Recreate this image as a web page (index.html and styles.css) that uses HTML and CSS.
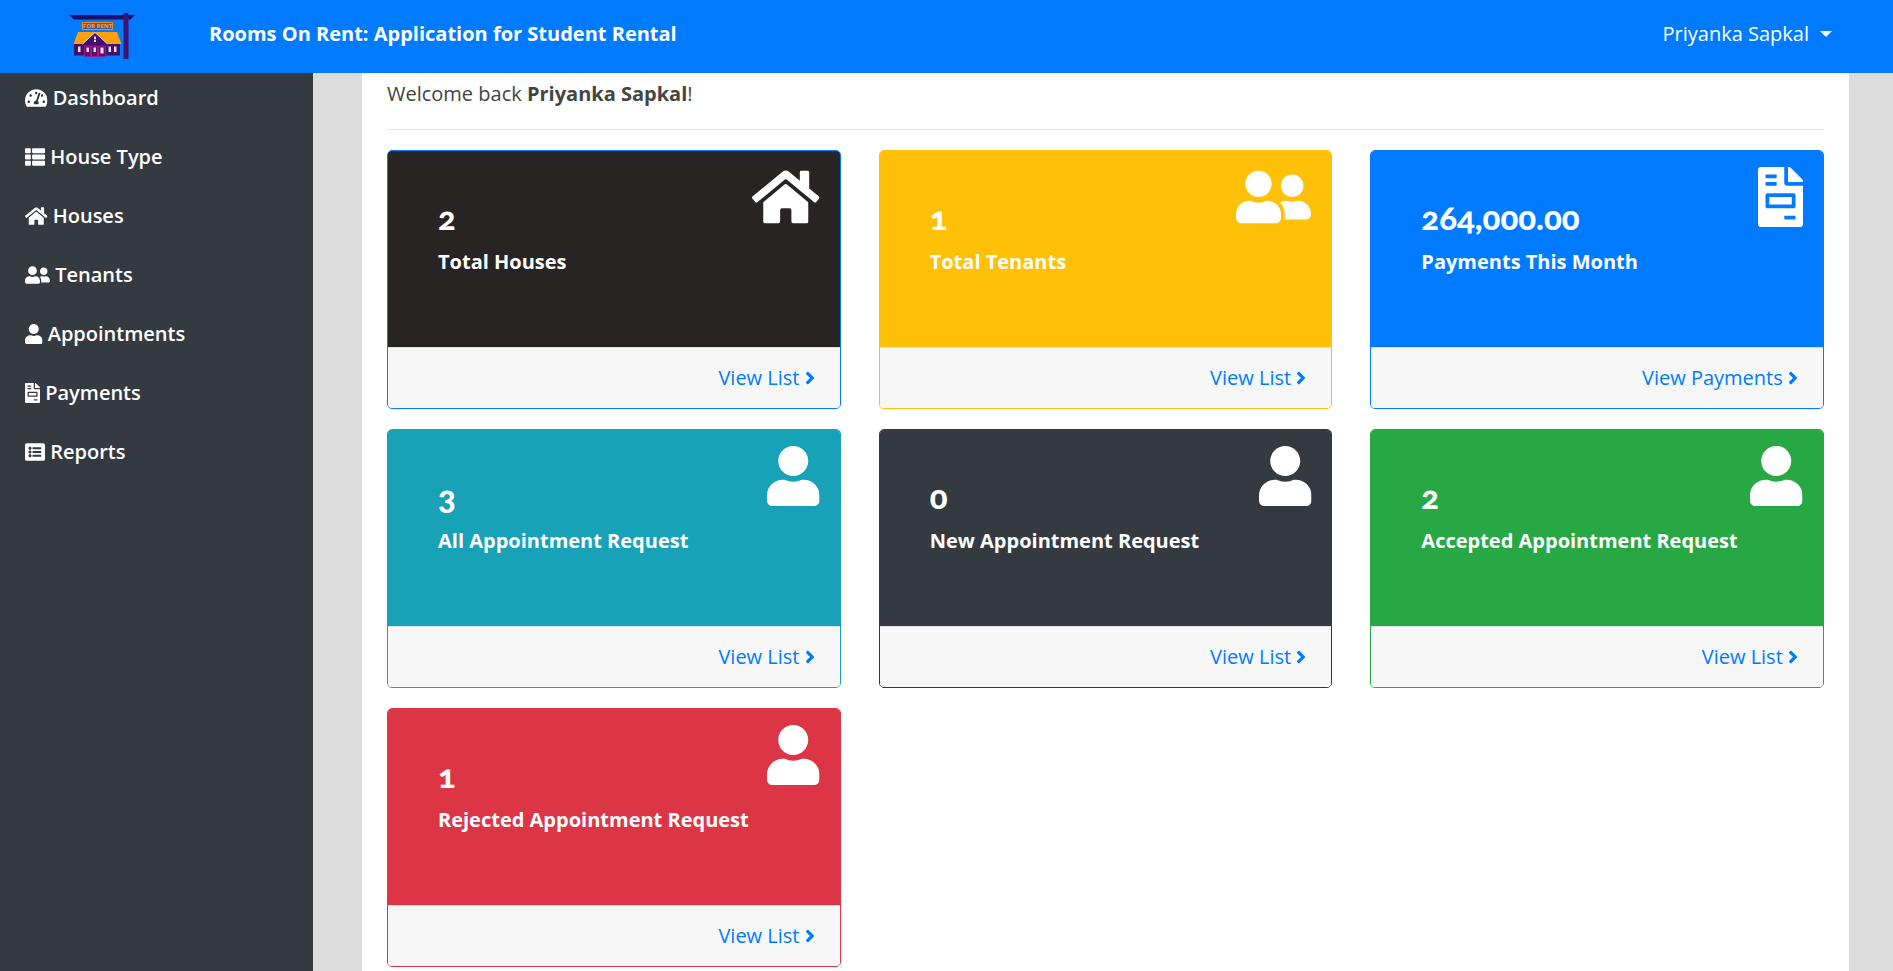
FILE: index.html
```
<!DOCTYPE html>
<html lang="en">
<head>
<meta charset="utf-8">
<meta name="viewport" content="width=device-width, initial-scale=1">
<title>Rooms On Rent</title>
<link rel="stylesheet" href="styles.css">
</head>
<body>
<svg class="sprite" aria-hidden="true">
  <symbol id="i-dash" viewBox="0 0 576 512"><path d="M288 32C128.94 32 0 160.94 0 320c0 52.8 14.25 102.26 39.06 144.8 5.61 9.62 16.3 15.2 27.44 15.2h443c11.14 0 21.83-5.58 27.44-15.2C561.75 422.26 576 372.8 576 320c0-159.06-128.94-288-288-288zm0 64c14.71 0 26.58 10.13 30.32 23.65-1.11 2.26-2.64 4.23-3.45 6.67l-9.22 27.67c-5.13 3.49-10.97 6.01-17.64 6.01-17.67 0-32-14.33-32-32S270.33 96 288 96zM96 384c-17.67 0-32-14.33-32-32s14.33-32 32-32 32 14.33 32 32-14.33 32-32 32zm48-160c-17.67 0-32-14.33-32-32s14.33-32 32-32 32 14.33 32 32-14.33 32-32 32zm246.77-72.41l-61.33 184C343.13 347.33 352 364.54 352 384c0 11.72-3.38 22.55-8.88 32H232.88c-5.5-9.45-8.88-20.28-8.88-32 0-33.94 26.5-61.43 59.9-63.59l61.34-184.01c4.17-12.56 17.73-19.45 30.36-15.17 12.57 4.19 19.35 17.79 15.17 30.36zm14.66 57.2l15.52-46.55c3.47-1.29 7.13-2.23 11.05-2.23 17.67 0 32 14.33 32 32s-14.33 32-32 32c-11.38-.01-20.89-6.28-26.57-15.22zM480 384c-17.67 0-32-14.33-32-32s14.33-32 32-32 32 14.33 32 32-14.33 32-32 32z"/></symbol>
  <symbol id="i-list" viewBox="0 0 512 512"><path d="M149.333 216v80c0 13.255-10.745 24-24 24H24c-13.255 0-24-10.745-24-24v-80c0-13.255 10.745-24 24-24h101.333c13.255 0 24 10.745 24 24zM0 376v80c0 13.255 10.745 24 24 24h101.333c13.255 0 24-10.745 24-24v-80c0-13.255-10.745-24-24-24H24c-13.255 0-24 10.745-24 24zM125.333 32H24C10.745 32 0 42.745 0 56v80c0 13.255 10.745 24 24 24h101.333c13.255 0 24-10.745 24-24V56c0-13.255-10.745-24-24-24zm80 448H488c13.255 0 24-10.745 24-24v-80c0-13.255-10.745-24-24-24H205.333c-13.255 0-24 10.745-24 24v80c0 13.255 10.745 24 24 24zm-24-424v80c0 13.255 10.745 24 24 24H488c13.255 0 24-10.745 24-24V56c0-13.255-10.745-24-24-24H205.333c-13.255 0-24 10.745-24 24zm24 264H488c13.255 0 24-10.745 24-24v-80c0-13.255-10.745-24-24-24H205.333c-13.255 0-24 10.745-24 24v80c0 13.255 10.745 24 24 24z"/></symbol>
  <symbol id="i-home" viewBox="0 0 576 512"><path d="M280.37 148.26L96 300.11V464a16 16 0 0 0 16 16l112.06-.29a16 16 0 0 0 15.92-16V368a16 16 0 0 1 16-16h64a16 16 0 0 1 16 16v95.64a16 16 0 0 0 16 16.05L464 480a16 16 0 0 0 16-16V300L295.67 148.26a12.19 12.19 0 0 0-15.3 0zM571.6 251.47L488 182.56V44.05a12 12 0 0 0-12-12h-56a12 12 0 0 0-12 12v72.61L318.47 43a48 48 0 0 0-61 0L4.34 251.47a12 12 0 0 0-1.6 16.9l25.5 31A12 12 0 0 0 45.15 301l235.22-193.74a12.19 12.19 0 0 1 15.3 0L530.9 301a12 12 0 0 0 16.9-1.6l25.5-31a12 12 0 0 0-1.7-16.93z"/></symbol>
  <symbol id="i-users" viewBox="0 0 640 512"><path d="M192 256c61.9 0 112-50.1 112-112S253.9 32 192 32 80 82.1 80 144s50.1 112 112 112zm76.8 32h-8.3c-20.8 10-43.9 16-68.5 16s-47.6-6-68.5-16h-8.3C51.6 288 0 339.6 0 403.2V432c0 26.5 21.5 48 48 48h288c26.5 0 48-21.5 48-48v-28.8c0-63.6-51.6-115.2-115.2-115.2zM480 256c53 0 96-43 96-96s-43-96-96-96-96 43-96 96 43 96 96 96zm48 32h-3.8c-13.9 4.8-28.6 8-44.2 8s-30.3-3.2-44.2-8H432c-20.4 0-39.2 5.9-55.7 15.4 24.4 26.3 39.7 61.2 39.7 99.8v38.4c0 2.2-.5 4.3-.6 6.4H592c26.5 0 48-21.5 48-48 0-61.9-50.1-112-112-112z"/></symbol>
  <symbol id="i-user" viewBox="0 0 448 512"><path d="M224 256c70.7 0 128-57.3 128-128S294.7 0 224 0 96 57.3 96 128s57.3 128 128 128zm89.6 32h-16.7c-22.2 10.2-46.9 16-72.9 16s-50.6-5.8-72.9-16h-16.7C60.2 288 0 348.2 0 422.4V464c0 26.5 21.5 48 48 48h352c26.5 0 48-21.5 48-48v-41.6c0-74.2-60.2-134.4-134.4-134.4z"/></symbol>
  <symbol id="i-file" viewBox="0 0 384 512"><path d="M288 256H96v64h192v-64zm89-151L279.1 7c-4.5-4.5-10.6-7-17-7H256v128h128v-6.1c0-6.3-2.5-12.4-7-16.9zm-153 31V0H24C10.7 0 0 10.7 0 24v464c0 13.3 10.7 24 24 24h336c13.3 0 24-10.7 24-24V160H248c-13.2 0-24-10.8-24-24zM64 72c0-4.42 3.58-8 8-8h80c4.42 0 8 3.58 8 8v16c0 4.42-3.58 8-8 8H72c-4.42 0-8-3.58-8-8V72zm0 64c0-4.42 3.58-8 8-8h80c4.42 0 8 3.58 8 8v16c0 4.42-3.58 8-8 8H72c-4.42 0-8-3.58-8-8v-16zm256 304c0 4.42-3.58 8-8 8h-80c-4.42 0-8-3.58-8-8v-16c0-4.42 3.58-8 8-8h80c4.42 0 8 3.58 8 8v16zm0-200v96c0 8.84-7.16 16-16 16H80c-8.84 0-16-7.16-16-16v-96c0-8.84 7.16-16 16-16h224c8.84 0 16 7.16 16 16z"/></symbol>
  <symbol id="i-report" viewBox="0 0 512 512"><path d="M464 480H48c-26.51 0-48-21.49-48-48V80c0-26.51 21.49-48 48-48h416c26.51 0 48 21.49 48 48v352c0 26.51-21.49 48-48 48zM128 120c-22.091 0-40 17.909-40 40s17.909 40 40 40 40-17.909 40-40-17.909-40-40-40zm0 96c-22.091 0-40 17.909-40 40s17.909 40 40 40 40-17.909 40-40-17.909-40-40-40zm0 96c-22.091 0-40 17.909-40 40s17.909 40 40 40 40-17.909 40-40-17.909-40-40-40zm288-136v-32c0-6.627-5.373-12-12-12H204c-6.627 0-12 5.373-12 12v32c0 6.627 5.373 12 12 12h200c6.627 0 12-5.373 12-12zm0 96v-32c0-6.627-5.373-12-12-12H204c-6.627 0-12 5.373-12 12v32c0 6.627 5.373 12 12 12h200c6.627 0 12-5.373 12-12zm0 96v-32c0-6.627-5.373-12-12-12H204c-6.627 0-12 5.373-12 12v32c0 6.627 5.373 12 12 12h200c6.627 0 12-5.373 12-12z"/></symbol>
  <symbol id="i-angle" viewBox="0 0 256 512"><path d="M224.3 273l-136 136c-9.4 9.4-24.6 9.4-33.9 0l-22.6-22.6c-9.4-9.4-9.4-24.6 0-33.9l96.4-96.4-96.4-96.4c-9.4-9.4-9.4-24.6 0-33.9L54.3 103c9.4-9.4 24.6-9.4 33.9 0l136 136c9.5 9.4 9.5 24.6.1 34z"/></symbol>
</svg>

<header class="topbar">
  <svg class="logo" viewBox="0 0 66 48" role="img" aria-label="For rent">
    <path fill="#1e1068" d="M0 2h66l-4.500 4.500H5z"/>
    <path fill="#3c1272" d="M54.500 0h5v46h-5z"/>
    <path stroke="#5a3a8c" d="M16 6v4M43 6v4"/>
    <path fill="#55508a" stroke="#e8960f" d="M13.500 9.500h30v7h-30z"/>
    <text class="logo-sign" x="28.500" y="15.400" text-anchor="middle">FOR RENT</text>
    <path fill="#42106e" d="M5 31h46v11.500H5z"/>
    <path fill="#ff9f0a" d="M9 19h39l4.500 12H4.500z"/>
    <path fill="#42106e" stroke="#f3d3c0" d="M13.500 31 26 19.500 38.500 31"/>
    <path fill="#560f74" stroke="#a01880" d="M15.500 33h6v10.500h-6zM22.500 33h6v10.500h-6zM29.500 33h7v10.500h-7z"/>
    <path fill="#f0dce6" d="M9 33.500h2.500V39H9zM17.500 34.500H20V39h-2.500zM24.500 34.500H27V39h-2.500zM31.500 34.500h3v6h-3zM39.500 33.500H42V39h-2.500zM45 33.500h2.500V39H45zM25 23.500h2V29h-2z"/>
    <path fill="#560f74" d="M24.500 26h3v.700h-3z"/>
  </svg>
  <strong class="brand">Rooms On Rent: Application for Student Rental</strong>
  <button class="account" type="button">Priyanka Sapkal<span class="caret"></span></button>
</header>

<div class="layout">
  <nav class="sidebar">
    <a href="#"><svg class="icon w576"><use href="#i-dash"/></svg> Dashboard</a>
    <a href="#"><svg class="icon w512"><use href="#i-list"/></svg> House Type</a>
    <a href="#"><svg class="icon w576"><use href="#i-home"/></svg> Houses</a>
    <a href="#"><svg class="icon w640"><use href="#i-users"/></svg> Tenants</a>
    <a href="#"><svg class="icon w448"><use href="#i-user"/></svg> Appointments</a>
    <a href="#"><svg class="icon w384"><use href="#i-file"/></svg> Payments</a>
    <a href="#"><svg class="icon w512"><use href="#i-report"/></svg> Reports</a>
  </nav>
  <main class="main">
    <div class="panel">
      <p class="welcome">Welcome back <b>Priyanka Sapkal</b>!</p>
      <hr class="rule">
      <div class="cards">
        <section class="card primary">
          <div class="card-body black"><svg class="icon big w576"><use href="#i-home"/></svg><h4>2</h4><p>Total Houses</p></div>
          <div class="card-foot"><a href="#">View List <svg class="icon w256"><use href="#i-angle"/></svg></a></div>
        </section>
        <section class="card warning">
          <div class="card-body"><svg class="icon big w640"><use href="#i-users"/></svg><h4>1</h4><p>Total Tenants</p></div>
          <div class="card-foot"><a href="#">View List <svg class="icon w256"><use href="#i-angle"/></svg></a></div>
        </section>
        <section class="card primary">
          <div class="card-body"><svg class="icon big w384"><use href="#i-file"/></svg><h4>264,000.00</h4><p>Payments This Month</p></div>
          <div class="card-foot"><a href="#">View Payments <svg class="icon w256"><use href="#i-angle"/></svg></a></div>
        </section>
        <section class="card info">
          <div class="card-body"><svg class="icon big w448"><use href="#i-user"/></svg><h4>3</h4><p>All Appointment Request</p></div>
          <div class="card-foot"><a href="#">View List <svg class="icon w256"><use href="#i-angle"/></svg></a></div>
        </section>
        <section class="card dark">
          <div class="card-body"><svg class="icon big w448"><use href="#i-user"/></svg><h4>0</h4><p>New Appointment Request</p></div>
          <div class="card-foot"><a href="#">View List <svg class="icon w256"><use href="#i-angle"/></svg></a></div>
        </section>
        <section class="card success">
          <div class="card-body"><svg class="icon big w448"><use href="#i-user"/></svg><h4>2</h4><p>Accepted Appointment Request</p></div>
          <div class="card-foot"><a href="#">View List <svg class="icon w256"><use href="#i-angle"/></svg></a></div>
        </section>
        <section class="card danger">
          <div class="card-body"><svg class="icon big w448"><use href="#i-user"/></svg><h4>1</h4><p>Rejected Appointment Request</p></div>
          <div class="card-foot"><a href="#">View List <svg class="icon w256"><use href="#i-angle"/></svg></a></div>
        </section>
      </div>
    </div>
  </main>
</div>
</body>
</html>
```
FILE: styles.css
```
* { box-sizing: border-box; }
body {
  margin: 0;
  min-height: 100vh;
  display: flex;
  flex-direction: column;
  background: #dcdcdc;
  color: #444;
  font: 400 20px/30px "Open Sans", "Noto Sans", sans-serif;
}
p, h4 { margin: 0; }
.sprite { display: none; }

.topbar {
  display: flex;
  align-items: flex-start;
  padding: 13px 61px 12px 69px;
  background: #007bff;
  color: #fff;
}
.logo { width: 66px; height: 48px; flex: none; }
.logo-sign { font: 700 6px "Open Sans", sans-serif; fill: #ffa61a; }
.brand { margin: 6px 0 0 74px; font-weight: 700; }
.account {
  display: flex;
  align-items: center;
  gap: 11px;
  margin: 6px 0 0 auto;
  padding: 0;
  border: 0;
  background: none;
  color: inherit;
  font: inherit;
}
.caret {
  border: 6px solid transparent;
  border-top-color: #fff;
  border-bottom: 0;
}

.layout { flex: 1; display: flex; }
.sidebar {
  flex: 0 0 313px;
  display: flex;
  flex-direction: column;
  gap: 9px;
  background: #343a40;
}
.sidebar a {
  padding: 10px 25px;
  color: #fff;
  font-weight: 600;
  text-decoration: none;
}

.icon {
  height: 1em;
  fill: currentColor;
  vertical-align: -0.125em;
  overflow: visible;
}
.w256 { width: 0.5em; }
.w384 { width: 0.75em; }
.w448 { width: 0.875em; }
.w512 { width: 1em; }
.w576 { width: 1.125em; }
.w640 { width: 1.25em; }

.main { flex: 1; display: flex; padding: 0 44px 0 49px; }
.panel { flex: 1; padding: 6px 25px 0; background: #fff; }
.rule { margin: 20px 0; border: 0; border-top: 1px solid #e5e5e5; }
.cards {
  display: grid;
  grid-template-columns: repeat(3, 1fr);
  gap: 20px 38px;
}
.card {
  border: 1px solid var(--tone);
  border-radius: 5px;
  background: #fff;
  overflow: hidden;
}
.primary { --tone: #007bff; }
.warning { --tone: #ffc107; }
.info { --tone: #17a2b8; }
.dark { --tone: #343a40; }
.success { --tone: #28a745; }
.danger { --tone: #dc3545; }
.card-body {
  position: relative;
  padding: 48px 50px 70px;
  background: var(--tone);
  color: #fff;
}
.card-body.black { background: #282423; }
.card-body h4 {
  margin-bottom: 12px;
  font: 900 33px/36px Lato, "Open Sans", sans-serif;
  font-variant-numeric: oldstyle-nums;
}
.card-body p { font-weight: 700; }
.big { position: absolute; top: 16px; right: 20px; font-size: 60px; }
.card-foot {
  padding: 15px 25px;
  border-top: 1px solid #dfdfdf;
  background: #f7f7f7;
  text-align: right;
}
.card-foot a { color: #007bff; text-decoration: none; }
```
